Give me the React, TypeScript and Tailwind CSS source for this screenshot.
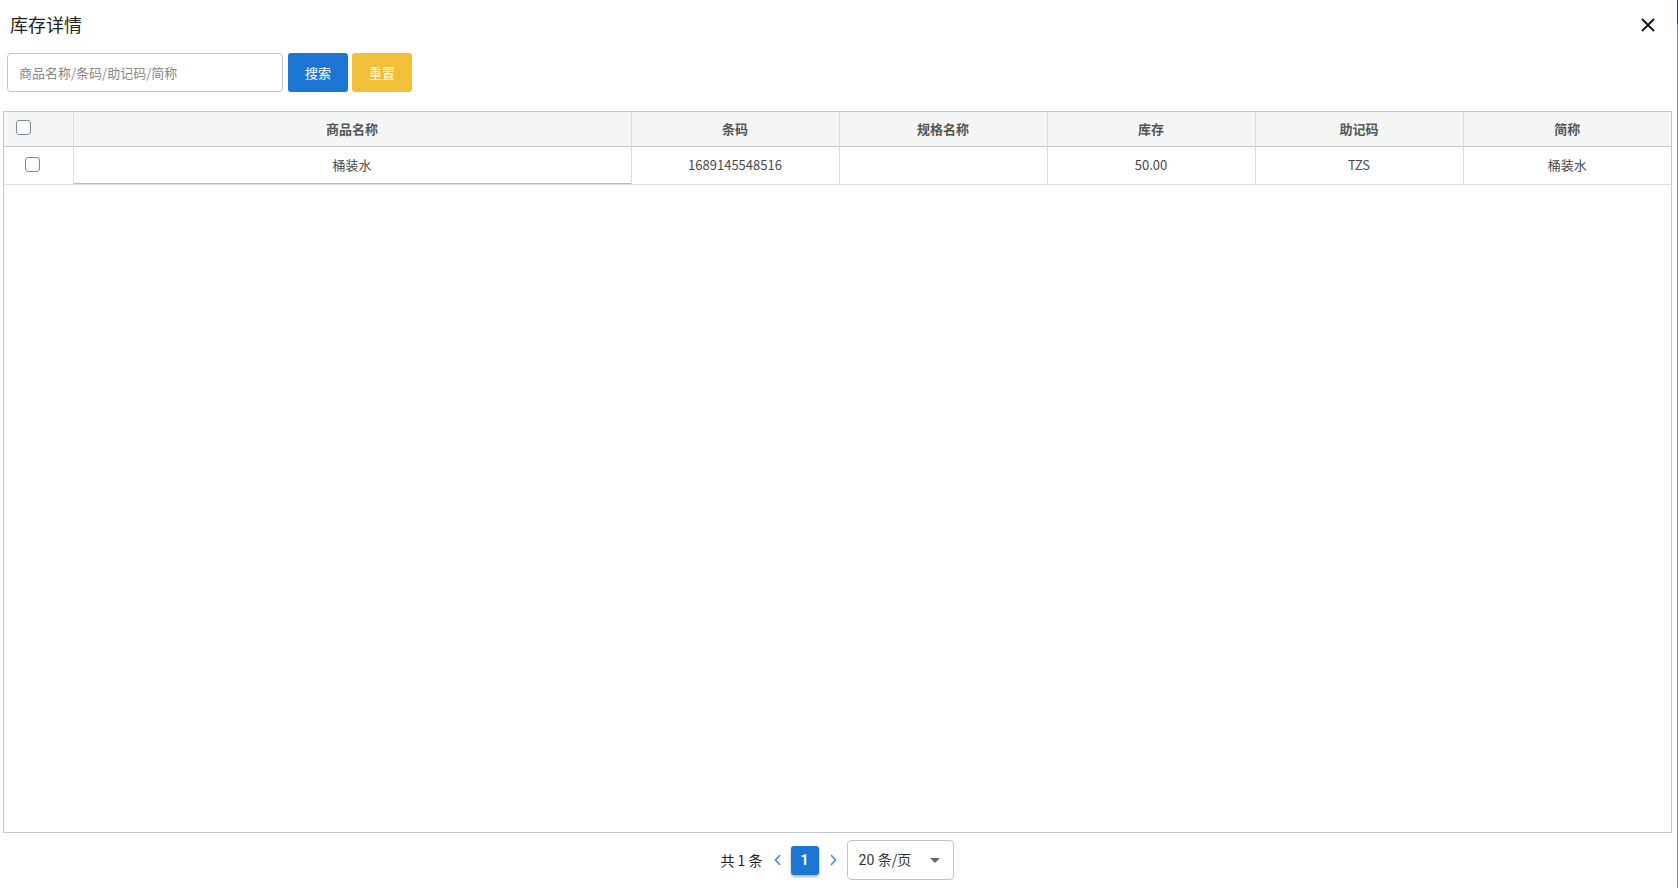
import React from "react";

const cjk = { fontFamily: '"Noto Sans CJK SC", "Noto Sans", sans-serif' };

function Check() {
  return <span className="block w-[15px] h-[15px] rounded-[3px] border border-[#7f8a94] bg-white" />;
}

export default function App() {
  const heads = ["商品名称", "条码", "规格名称", "库存", "助记码", "简称"];
  const row = ["桶装水", "1689145548516", "", "50.00", "TZS", "桶装水"];
  return (
    <div className="w-[1678px] h-[888px] bg-white flex flex-col relative overflow-hidden" style={cjk}>
      <div className="absolute right-0 top-0 w-[1px] h-full bg-[#8a8a8a]" />
      <div className="absolute right-0 top-0 w-[1px] h-[24px] bg-[#1e4f8a]" />
      <div className="h-[48px] shrink-0 flex items-center justify-between pl-[10px] pr-[23px]">
        <span className="text-[18px] text-[#222] leading-none">库存详情</span>
        <svg width="14" height="14" viewBox="0 0 14 14" className="mt-[1px]">
          <path d="M1 1L13 13M13 1L1 13" stroke="#111" strokeWidth="1.8" />
        </svg>
      </div>
      <div className="flex pl-[7px] pt-[5px] gap-[4px] shrink-0">
        <div className="w-[276px] h-[39px] border border-[#c4c4c4] rounded-[4px] flex items-center pl-[11px] text-[13px] text-[#888] mr-[1px]">
          商品名称/条码/助记码/简称
        </div>
        <div className="w-[60px] h-[39px] rounded-[3px] bg-[#1a76d2] text-white text-[13px] flex items-center justify-center">搜索</div>
        <div className="w-[60px] h-[39px] rounded-[3px] bg-[#f1bf38] text-white text-[13px] flex items-center justify-center">重置</div>
      </div>
      <div className="mt-[19px] ml-[3px] w-[1669px] h-[722px] shrink-0 border border-[#c6cace]">
        <table className="table-fixed border-collapse w-[1667px] text-[13px]">
          <colgroup>
            <col className="w-[69px]" />
            <col className="w-[558px]" />
            <col className="w-[208px]" />
            <col className="w-[208px]" />
            <col className="w-[208px]" />
            <col className="w-[208px]" />
            <col className="w-[208px]" />
          </colgroup>
          <thead>
            <tr className="h-[34px] bg-[#f4f6f6] border-b border-[#c6cace]">
              <th className="font-normal">
                <div className="flex pl-[12px] pb-[3px]">
                  <Check />
                </div>
              </th>
              {heads.map((h) => (
                <th key={h} className="border-l border-[#dadde0] font-bold text-[#555] text-center">
                  {h}
                </th>
              ))}
            </tr>
          </thead>
          <tbody>
            <tr className="h-[38px] border-b border-[#dcdfe2]">
              <td>
                <div className="flex pl-[21px] pb-[2px]">
                  <Check />
                </div>
              </td>
              {row.map((c, i) => (
                <td
                  key={i}
                  className={
                    "border-l border-[#dadde0] text-center text-[#4a4a4a] " +
                    (i === 0 ? "shadow-[inset_0_-1px_0_#b9bcbf]" : "")
                  }
                >
                  {c}
                </td>
              ))}
            </tr>
          </tbody>
        </table>
      </div>
      <div className="flex-1 flex items-center justify-center pr-[4px] pb-[1px]" style={{ fontFamily: "Roboto, sans-serif" }}>
        <span className="text-[14px] text-[#222] mr-[10px]" style={cjk}>共 1 条</span>
        <svg width="10" height="14" viewBox="0 0 10 14" className="mr-[8px]">
          <path d="M7 2L2.5 7L7 12" stroke="#4d94e0" strokeWidth="1.8" fill="none" />
        </svg>
        <div className="w-[28px] h-[29px] rounded-[3px] bg-[#1a76d2] text-white text-[14px] font-bold flex items-center justify-center shadow-[0_2px_3px_rgba(0,0,0,0.3)]">
          1
        </div>
        <svg width="10" height="14" viewBox="0 0 10 14" className="ml-[9px] mr-[9px]">
          <path d="M3 2L7.5 7L3 12" stroke="#4d94e0" strokeWidth="1.8" fill="none" />
        </svg>
        <div className="w-[107px] h-[40px] border border-[#c4c4c4] rounded-[4px] flex items-center pl-[11px] pr-[13px] justify-between text-[14px] text-[#333]">
          <span>20 <span style={cjk}>条/页</span></span>
          <svg width="10" height="5" viewBox="0 0 10 5">
            <path d="M0 0H10L5 5Z" fill="#666" />
          </svg>
        </div>
      </div>
    </div>
  );
}
